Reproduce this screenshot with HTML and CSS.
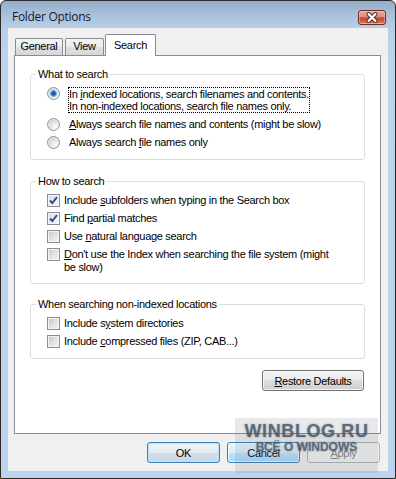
FILE: index.html
```html
<!DOCTYPE html>
<html lang="en">
<head>
    <meta charset="UTF-8">
    <meta name="viewport" content="width=device-width, initial-scale=1.0">
    <title>Folder Options</title>
    <link rel="stylesheet" href="styles.css">
</head>
<body>

<div class="window">
    <div class="titlebar">
        <span class="title">Folder Options</span>
        <button class="close-button" title="Close">
            <svg width="16" height="11" viewBox="0 0 16 11">
                <path d="M4.5 2 L11.5 9 M11.5 2 L4.5 9" stroke="#4a2a24" stroke-width="4" stroke-linecap="round"/>
                <path d="M4.5 2 L11.5 9 M11.5 2 L4.5 9" stroke="#ffffff" stroke-width="2.2" stroke-linecap="round"/>
            </svg>
        </button>
    </div>

    <div class="client">
        <div class="tabs">
            <div class="tab tab-general">General</div>
            <div class="tab tab-view">View</div>
            <div class="tab tab-active">Search</div>
        </div>

        <div class="panel">
            <!-- What to search -->
            <fieldset class="group group-what">
                <legend>What to search</legend>
                <div class="option">
                    <span class="radio radio-checked"></span>
                    <span class="radio-label focused">In <u>i</u>ndexed locations, search filenames and contents.<br>In non-indexed locations, search file names only.</span>
                </div>
                <div class="option">
                    <span class="radio"></span>
                    <span class="radio-label"><u>A</u>lways search file names and contents (might be slow)</span>
                </div>
                <div class="option">
                    <span class="radio"></span>
                    <span class="radio-label">Always search <u>f</u>ile names only</span>
                </div>
            </fieldset>

            <!-- How to search -->
            <fieldset class="group group-how">
                <legend>How to search</legend>
                <div class="option">
                    <span class="check check-on">
                        <svg width="11" height="11" viewBox="0 0 11 11"><path d="M2 5.5 L4.3 8 L9 2.2" fill="none" stroke="#2b4a9a" stroke-width="1.9"/></svg>
                    </span>
                    <span>Include <u>s</u>ubfolders when typing in the Search box</span>
                </div>
                <div class="option">
                    <span class="check check-on">
                        <svg width="11" height="11" viewBox="0 0 11 11"><path d="M2 5.5 L4.3 8 L9 2.2" fill="none" stroke="#2b4a9a" stroke-width="1.9"/></svg>
                    </span>
                    <span>Find <u>p</u>artial matches</span>
                </div>
                <div class="option">
                    <span class="check"></span>
                    <span>Use <u>n</u>atural language search</span>
                </div>
                <div class="option">
                    <span class="check"></span>
                    <span><u>D</u>on't use the Index when searching the file system (might<br>be slow)</span>
                </div>
            </fieldset>

            <!-- When searching non-indexed locations -->
            <fieldset class="group group-nonindexed">
                <legend>When searching non-indexed locations</legend>
                <div class="option">
                    <span class="check"></span>
                    <span>Include s<u>y</u>stem directories</span>
                </div>
                <div class="option">
                    <span class="check"></span>
                    <span>Include <u>c</u>ompressed files (ZIP, CAB...)</span>
                </div>
            </fieldset>

            <div class="restore-row">
                <button class="button button-restore"><u>R</u>estore Defaults</button>
            </div>
        </div>

        <div class="footer">
            <button class="button button-default">OK</button>
            <button class="button button-hot">Cancel</button>
            <button class="button button-disabled"><u>A</u>pply</button>
        </div>
    </div>

    <div class="watermark">
        <div class="watermark-site">WINBLOG.RU</div>
        <div class="watermark-sub">ВСЁ О WINDOWS</div>
    </div>
</div>

</body>
</html>
```

FILE: styles.css
```css
* {
    margin: 0;
    padding: 0;
    box-sizing: border-box;
}

body {
    font-family: "Liberation Sans", Arial, sans-serif;
    font-size: 11px;
    letter-spacing: -0.3px;
    color: #000000;
    background-color: #ffffff;
}

u {
    text-decoration: underline;
}

/* Window frame */
.window {
    position: relative;
    width: 396px;
    height: 479px;
    display: flex;
    flex-direction: column;
    border: 1px solid #2a2a2a;
    border-radius: 6px 6px 0 0;
    background: linear-gradient(to bottom, #94adc9 0px, #a9c1db 14px, #b9cfe7 28px, #bed4ec 60px, #bcd3eb 100%);
}

.titlebar {
    height: 27px;
    display: flex;
    justify-content: space-between;
    align-items: flex-start;
    padding: 0 9px 0 11px;
}

.title {
    font-family: "Open Sans", sans-serif;
    font-size: 12px;
    letter-spacing: -0.3px;
    line-height: 16px;
    padding-top: 8px;
    color: #1a1a26;
}

.close-button {
    width: 28px;
    height: 15px;
    margin-top: 9px;
    border: 1px solid #6b2c22;
    border-radius: 3px;
    background: linear-gradient(to bottom, #e8aa9a 0%, #da8e7d 45%, #c64a30 52%, #cd5a40 75%, #df8a70 100%);
    box-shadow: inset 0 0 0 1px rgba(255, 220, 210, 0.45);
    display: flex;
    justify-content: center;
    align-items: center;
}

.client {
    flex: 1;
    margin: 0 7px 7px;
    background-color: #f0f0f0;
    display: flex;
    flex-direction: column;
}

/* Tabs */
.tabs {
    display: flex;
    align-items: flex-end;
    height: 21px;
    margin-top: 6px;
    padding-left: 7px;
}

.tab {
    height: 17px;
    line-height: 15px;
    border: 1px solid #898c95;
    border-bottom: none;
    border-radius: 2px 2px 0 0;
    background: linear-gradient(to bottom, #f4f4f4 0%, #ececec 50%, #e0e0e0 50%, #d7d7d7 100%);
    text-align: center;
}

.tab-general {
    width: 48px;
    margin-right: 2px;
}

.tab-view {
    width: 39px;
    margin-right: 1px;
}

.tab-active {
    position: relative;
    width: 51px;
    height: 22px;
    line-height: 20px;
    margin-bottom: -1px;
    background: #ffffff;
}

/* Tab page */
.panel {
    height: 379px;
    margin: 0 7px 0 6px;
    border: 1px solid #898c95;
    background-color: #ffffff;
    padding: 12px 15px 0;
}

.group {
    border: 1px solid #d5dfe5;
    border-radius: 3px;
    padding: 6px 8px 9px 5px;
    min-width: 0;
}

.group legend {
    padding: 0 2px;
    line-height: 13px;
}

.group-how {
    margin-top: 15px;
}

.group-nonindexed {
    margin-top: 14px;
    padding-bottom: 10px;
}

.option {
    display: flex;
    align-items: flex-start;
    line-height: 13px;
    margin-left: 11px;
}

.option + .option {
    margin-top: 5px;
}

.group-what .option + .option {
    margin-top: 4px;
}

.group-what .option + .option + .option {
    margin-top: 3px;
}

/* Radio buttons */
.radio {
    flex-shrink: 0;
    width: 13px;
    height: 13px;
    margin: 1px 8px 0 0;
    border: 1px solid #8e8f8f;
    border-radius: 50%;
    background: radial-gradient(circle at 65% 70%, #fbfbfb 0, #e6e6e6 4px, #cfd1d4 7px);
    box-shadow: inset 0 0 0 1px rgba(255, 255, 255, 0.6);
}

.radio-checked {
    margin-top: 0;
    background:
        radial-gradient(circle at 50% 50%, #163f8a 0, #2a6fc2 2px, #7fc0ee 3.2px, #c6e4f8 3.8px, rgba(255, 255, 255, 0) 4.2px),
        radial-gradient(circle at 65% 70%, #fbfbfb 0, #e6e6e6 4px, #cfd1d4 7px);
}

.radio-label {
    border: 1px dotted transparent;
}

.radio-label.focused {
    line-height: 12px;
    border-color: #000000;
}

/* Check boxes */
.check {
    flex-shrink: 0;
    width: 13px;
    height: 13px;
    margin-right: 4px;
    border: 1px solid #8e8f8f;
    background: linear-gradient(135deg, #c3c7cc 0%, #e4e5e7 60%, #f4f4f4 100%);
    box-shadow: inset 0 0 0 1px #f4f4f4;
    display: flex;
    justify-content: center;
    align-items: center;
}

.check-on {
    background: linear-gradient(135deg, #d8dbe0 0%, #eeeff1 60%, #fafafa 100%);
}

/* Buttons */
.button {
    height: 21px;
    font: inherit;
    letter-spacing: inherit;
    color: #000000;
    border: 1px solid #707070;
    border-radius: 3px;
    background: linear-gradient(to bottom, #f3f3f3 0%, #ebebeb 50%, #dddddd 50%, #cfcfcf 100%);
    box-shadow: inset 0 0 0 1px rgba(255, 255, 255, 0.75);
}

.restore-row {
    display: flex;
    justify-content: flex-end;
    margin-top: 11px;
    padding-right: 1px;
}

.button-restore {
    width: 102px;
}

.footer {
    display: flex;
    justify-content: flex-end;
    gap: 7px;
    margin-top: 8px;
    padding-right: 8px;
}

.footer .button {
    width: 73px;
}

.button-default {
    border-color: #3c7fb1;
    background: linear-gradient(to bottom, #eef3f7 0%, #e3ebf1 50%, #d2dfe9 50%, #c6d6e3 100%);
    box-shadow: inset 0 0 0 1px #bfe6f8;
}

.button-hot {
    border-color: #3c7fb1;
    background: linear-gradient(to bottom, #eaf6fd 0%, #d9f0fc 50%, #bee6fd 50%, #a7d9f5 100%);
}

.button-disabled {
    color: #838383;
    border-color: #adb2b5;
    background: #f4f4f4;
    box-shadow: none;
}

/* Site watermark over the corner */
.watermark {
    position: absolute;
    left: 234px;
    top: 417px;
    width: 143px;
    height: 55px;
    padding-top: 4px;
    background-color: rgba(110, 118, 128, 0.16);
    text-align: center;
    font-weight: bold;
    color: rgba(70, 86, 104, 0.75);
    text-shadow: 0 0 2px rgba(70, 86, 104, 0.6);
    pointer-events: none;
}

.watermark-site {
    font-size: 18px;
    line-height: 18px;
    letter-spacing: 0.6px;
}

.watermark-sub {
    font-size: 12px;
    line-height: 14px;
    letter-spacing: 0;
}
```
